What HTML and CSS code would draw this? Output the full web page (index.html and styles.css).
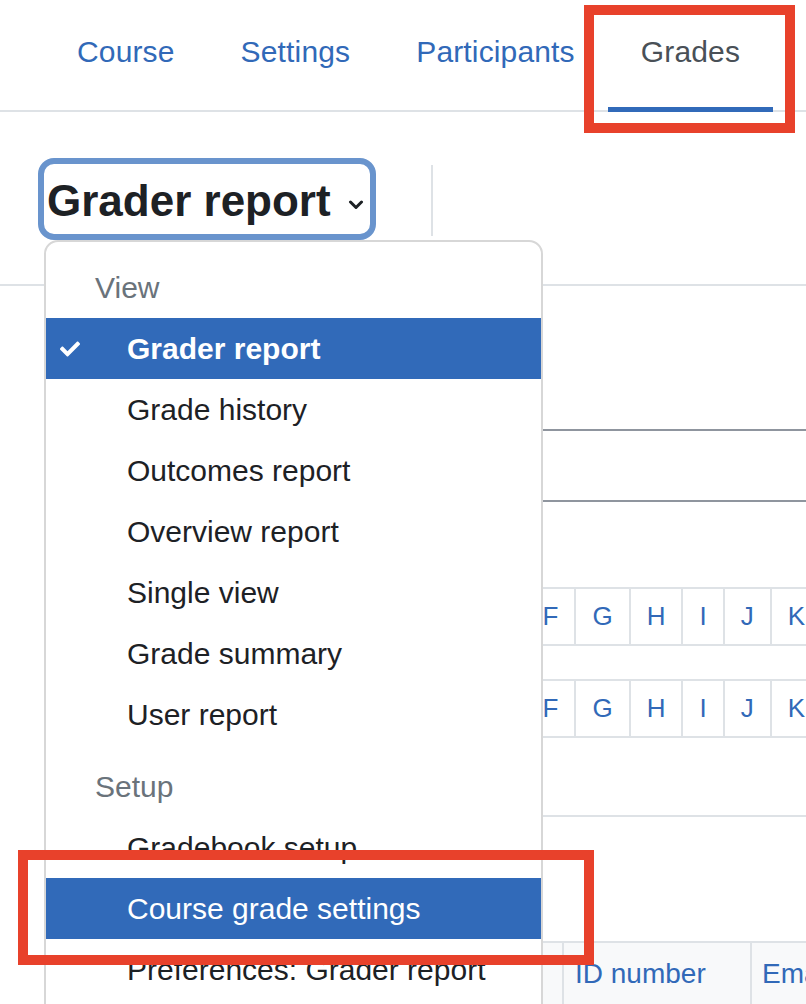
FILE: index.html
```html
<!DOCTYPE html>
<html lang="en">
<head>
  <meta charset="UTF-8" />
  <meta name="viewport" content="width=device-width, initial-scale=1.0" />
  <title>Grades</title>
  <link rel="stylesheet" href="styles.css">
</head>
<body>
  <div class="page">
    <!-- course tabs -->
    <nav class="tabs">
      <a href="#" class="tab">Course</a>
      <a href="#" class="tab">Settings</a>
      <a href="#" class="tab">Participants</a>
      <a href="#" class="tab active">Grades</a>
    </nav>

    <!-- report selector -->
    <div class="tertiary">
      <div class="select-wrap">
        <div class="report-select">
          <h2 class="report-title">Grader report</h2>
          <svg class="chevron" width="16" height="10" viewBox="0 0 16 10">
            <polyline points="2.5,2 8,7.5 13.5,2" fill="none" stroke="#1d2125" stroke-width="3" stroke-linecap="round" stroke-linejoin="round" />
          </svg>
        </div>

        <div class="dropdown">
          <div class="dropdown-header">View</div>
          <a href="#" class="item selected">
            <span class="check">
              <svg width="20" height="20" viewBox="0 0 512 512"><path fill="#fff" d="M173.9 439.4l-166.4-166.4c-10-10-10-26.2 0-36.2l36.2-36.2c10-10 26.2-10 36.2 0L192 312.7 432.1 72.6c10-10 26.2-10 36.2 0l36.2 36.2c10 10 10 26.2 0 36.2l-294.4 294.4c-10 10-26.2 10-36.2 0z"/></svg>
            </span>
            Grader report
          </a>
          <a href="#" class="item"><span class="check"></span>Grade history</a>
          <a href="#" class="item"><span class="check"></span>Outcomes report</a>
          <a href="#" class="item"><span class="check"></span>Overview report</a>
          <a href="#" class="item"><span class="check"></span>Single view</a>
          <a href="#" class="item"><span class="check"></span>Grade summary</a>
          <a href="#" class="item"><span class="check"></span>User report</a>
          <div class="dropdown-header setup">Setup</div>
          <a href="#" class="item"><span class="check"></span>Gradebook setup</a>
          <a href="#" class="item selected"><span class="check"></span>Course grade settings</a>
          <a href="#" class="item"><span class="check"></span>Preferences: Grader report</a>
        </div>
      </div>
      <div class="divider"></div>
    </div>

    <!-- report behind the menu -->
    <div class="report">
      <div class="search-box"></div>

      <div class="initials">
        <span class="initials-label">First name</span>
        <a href="#" class="letter first">All</a>
        <a href="#" class="letter">A</a>
        <a href="#" class="letter">B</a>
        <a href="#" class="letter">C</a>
        <a href="#" class="letter">D</a>
        <a href="#" class="letter">E</a>
        <a href="#" class="letter">F</a>
        <a href="#" class="letter">G</a>
        <a href="#" class="letter">H</a>
        <a href="#" class="letter">I</a>
        <a href="#" class="letter">J</a>
        <a href="#" class="letter">K</a>
      </div>

      <div class="initials">
        <span class="initials-label">Last name</span>
        <a href="#" class="letter first">All</a>
        <a href="#" class="letter">A</a>
        <a href="#" class="letter">B</a>
        <a href="#" class="letter">C</a>
        <a href="#" class="letter">D</a>
        <a href="#" class="letter">E</a>
        <a href="#" class="letter">F</a>
        <a href="#" class="letter">G</a>
        <a href="#" class="letter">H</a>
        <a href="#" class="letter">I</a>
        <a href="#" class="letter">J</a>
        <a href="#" class="letter">K</a>
      </div>

      <div class="table-top"></div>

      <div class="table-head">
        <div class="th th-name">First name / Last name</div>
        <div class="th th-id"><a href="#">ID number</a></div>
        <div class="th th-email"><a href="#">Email address</a></div>
      </div>
    </div>
  </div>

  <!-- annotation boxes -->
  <div class="mark mark-tab"></div>
  <div class="mark mark-item"></div>
</body>
</html>
```

FILE: styles.css
```css
html, body {
  overflow: hidden;
}

body {
  margin: 0;
  background: #fff;
  color: #1d2125;
  font-family: 'Liberation Sans', Arial, sans-serif;
  font-size: 30px;
  line-height: 45px;
}

a {
  text-decoration: none;
}

.page {
  position: relative;
  width: 806px;
  height: 1004px;
  overflow: hidden;
}

.tabs {
  display: flex;
  padding-left: 44px;
  border-bottom: 2px solid #dee2e6;
}

.tab {
  position: relative;
  padding: 29px 33px 36px;
  color: #3169b8;
  letter-spacing: 0.15px;
  white-space: nowrap;
}

.tab.active {
  color: #495057;
}

.tab.active:after {
  content: "";
  position: absolute;
  left: 0;
  right: 0;
  bottom: -2px;
  height: 5px;
  background: #316ab9;
}

.tertiary {
  display: flex;
  align-items: flex-start;
  height: 174px;
  padding-top: 46px;
  box-sizing: border-box;
  border-bottom: 2px solid #dee2e6;
}

.select-wrap {
  position: relative;
  margin-left: 38px;
  z-index: 5;
}

.report-select {
  display: flex;
  align-items: center;
  height: 82px;
  box-sizing: border-box;
  padding: 0 6px 0 3px;
  border: 6px solid #6994cd;
  border-radius: 16px;
}

.report-title {
  margin: 0;
  padding-top: 4px;
  font-size: 44px;
  line-height: 66px;
  font-weight: bold;
  color: #1d2125;
  white-space: nowrap;
}

.chevron {
  margin: 12px 0 0 17px;
}

.divider {
  width: 2px;
  height: 71px;
  margin: 7px 0 0 55px;
  background: #dee2e6;
}

.dropdown {
  position: absolute;
  top: 100%;
  left: 6px;
  width: 499px;
  box-sizing: border-box;
  padding: 15px 0 16px;
  background: #fff;
  border: 2px solid #d7d7d7;
  border-radius: 14px;
}

.dropdown-header {
  padding: 8px 0 8px 49px;
  color: #6a737b;
}

.dropdown-header.setup {
  margin-top: 11px;
}

.item {
  display: flex;
  align-items: center;
  padding: 8px 16px 8px 14px;
  color: #1d2125;
  white-space: nowrap;
}

.item.selected {
  background: #316ab9;
  color: #fff;
}

.item.selected:first-of-type {
  font-weight: bold;
}

.check {
  display: flex;
  width: 67px;
  flex-shrink: 0;
}

.report {
  padding-left: 60px;
}

.search-box {
  width: 760px;
  height: 73px;
  margin-top: 143px;
  box-sizing: border-box;
  border: 2px solid #8f959e;
  border-right: none;
}

.initials {
  display: flex;
  width: 746px;
  overflow: hidden;
  margin-top: 85px;
  border-top: 2px solid #dee2e6;
  border-bottom: 2px solid #dee2e6;
  font-size: 26px;
}

.initials + .initials {
  margin-top: 33px;
}

.initials-label {
  width: 142px;
  flex-shrink: 0;
  padding: 5px 0;
  line-height: 45px;
}

.letter {
  flex-shrink: 0;
  padding: 5px 16px;
  line-height: 45px;
  color: #3169b8;
  border-right: 2px solid #dee2e6;
}

.letter.first {
  border-left: 2px solid #dee2e6;
}

.table-top {
  height: 124px;
  margin-top: 77px;
  border-top: 2px solid #dee2e6;
}

.table-head {
  display: flex;
  background: #f8f9fa;
  border-top: 2px solid #dee2e6;
  font-size: 28px;
}

.th {
  flex-shrink: 0;
  height: 80px;
  padding: 8px 11px;
  white-space: nowrap;
  border-left: 2px solid #dee2e6;
}

.th a {
  color: #3169b8;
}

.th-name {
  width: 502px;
  box-sizing: border-box;
  border-left: none;
}

.th-id {
  width: 175px;
  padding-right: 0;
}

.th-email {
  padding-left: 10px;
}

.mark {
  position: absolute;
  border: 10px solid #e8412b;
  box-sizing: border-box;
  z-index: 10;
}

.mark-tab {
  left: 584px;
  top: 5px;
  width: 211px;
  height: 128px;
}

.mark-item {
  left: 18px;
  top: 850px;
  width: 576px;
  height: 115px;
}
```
